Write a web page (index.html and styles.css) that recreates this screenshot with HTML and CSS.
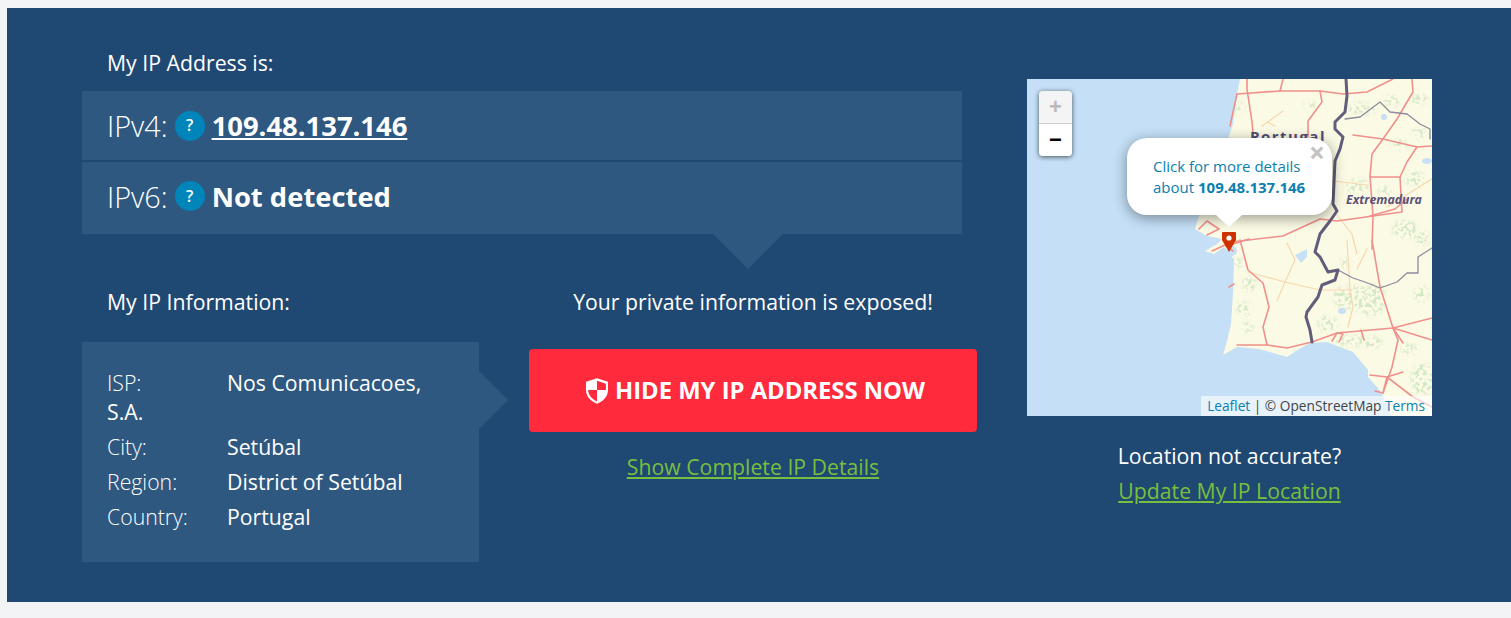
FILE: index.html
```html
<!DOCTYPE html>
<html lang="en">
<head>
<meta charset="utf-8">
<title>My IP Address</title>
<link rel="stylesheet" href="styles.css">
</head>
<body>
<main class="panel">
  <section class="left">
    <h2 class="heading">My IP Address is:</h2>
    <div class="ip-rows">
      <div class="ip-row ip-row-first">
        <span class="ip-label">IPv4:</span>
        <span class="help">?</span>
        <a class="ip-value" href="#">109.48.137.146</a>
      </div>
      <div class="ip-row ip-row-second">
        <span class="ip-label">IPv6:</span>
        <span class="help">?</span>
        <strong class="ip-none">Not detected</strong>
      </div>
    </div>
    <div class="lower">
      <div class="info-col">
        <h2 class="heading info-heading">My IP Information:</h2>
        <div class="info-box">
          <div class="info-item"><span class="info-key">ISP:</span>Nos Comunicacoes, S.A.</div>
          <div class="info-item"><span class="info-key">City:</span>Setúbal</div>
          <div class="info-item"><span class="info-key">Region:</span>District of Setúbal</div>
          <div class="info-item"><span class="info-key">Country:</span>Portugal</div>
        </div>
      </div>
      <div class="action-col">
        <p class="exposed">Your private information is exposed!</p>
        <a class="hide-btn" href="#">
          <svg class="shield" viewBox="0 0 24 28" aria-hidden="true">
            <path fill="#fff" d="M12 0 L24 4 V13 C24 20.500 18.500 25.500 12 28 C5.500 25.500 0 20.500 0 13 V4 Z"/>
            <path fill="#ff2a3c" d="M12 2.800 L21.700 6 V13 H12 Z M2.300 13 H12 V25.400 C6.800 23.200 2.700 19 2.300 13 Z"/>
          </svg>
          HIDE MY IP ADDRESS NOW
        </a>
        <a class="green-link" href="#">Show Complete IP Details</a>
      </div>
    </div>
  </section>
  <aside class="right">
    <div class="map">
      <svg class="map-art" viewBox="0 0 405 337" aria-hidden="true">
        <defs>
          <filter id="speckle" x="0" y="0" width="100%" height="100%">
            <feGaussianBlur in="SourceGraphic" stdDeviation="2" result="area"/>
            <feTurbulence type="fractalNoise" baseFrequency="0.28" numOctaves="2" seed="7"/>
            <feColorMatrix type="matrix" values="0 0 0 0 0.66  0 0 0 0 0.81  0 0 0 0 0.56  0 0 0 7 -3.300"/>
            <feGaussianBlur stdDeviation="0.500"/>
            <feComposite in2="area" operator="in"/>
          </filter>
          <filter id="softer" x="-10%" y="-10%" width="120%" height="120%"><feGaussianBlur stdDeviation="0.450"/></filter>
        </defs>
        <rect width="405" height="337" fill="#c4dff6"/>
        <path fill="#fbfae4" filter="url(#softer)" d="M213 0 L209 20 L206 45 L196 75 L185 110 L172 137 L168 150 L180 157 L195 160 L190 165 L178 172 L187 175 L197 168 L207 180 L206 214 L204 245 L200 262 L196 276 L210 268 L232 270 L253 276 L260 278 L272 270 L283 264 L300 263 L326 273 L341 291 L341 298 L350 308 L356 317 L365 337 L405 337 L405 0 Z"/>
        <g fill="#000" filter="url(#speckle)">
          <ellipse cx="283" cy="26" rx="6" ry="4"/><ellipse cx="213" cy="30" rx="4" ry="7"/><ellipse cx="335" cy="30" rx="14" ry="6"/>
          <ellipse cx="365" cy="22" rx="9" ry="5"/><ellipse cx="392" cy="20" rx="9" ry="5"/><ellipse cx="392" cy="54" rx="8" ry="5"/>
          <ellipse cx="372" cy="65" rx="9" ry="5"/><ellipse cx="388" cy="100" rx="10" ry="8"/><ellipse cx="358" cy="112" rx="7" ry="5"/>
          <ellipse cx="330" cy="107" rx="12" ry="7"/><ellipse cx="378" cy="150" rx="13" ry="9"/><ellipse cx="395" cy="160" rx="8" ry="7"/>
          <ellipse cx="318" cy="184" rx="6" ry="5"/><ellipse cx="325" cy="218" rx="20" ry="12"/><ellipse cx="345" cy="225" rx="12" ry="12"/>
          <ellipse cx="300" cy="245" rx="10" ry="8"/><ellipse cx="322" cy="262" rx="16" ry="6"/>
          <ellipse cx="345" cy="263" rx="10" ry="6"/><ellipse cx="396" cy="300" rx="12" ry="16"/><ellipse cx="382" cy="270" rx="9" ry="5"/>
          <ellipse cx="223" cy="205" rx="8" ry="7"/><ellipse cx="216" cy="230" rx="8" ry="7"/><ellipse cx="221" cy="248" rx="5" ry="6"/>
          <ellipse cx="212" cy="184" rx="5" ry="5"/><ellipse cx="350" cy="210" rx="9" ry="7"/><ellipse cx="395" cy="215" rx="8" ry="8"/>
        </g>
        <g fill="#c7e0f5" filter="url(#softer)">
          <path d="M268 176 L280 170 L280 178 L274 184 Z"/>
          <ellipse cx="357" cy="38" rx="3" ry="3"/><ellipse cx="400" cy="82" rx="5" ry="3"/><ellipse cx="315" cy="232" rx="4" ry="3"/>
          <ellipse cx="205" cy="172" rx="5" ry="5"/>
        </g>
        <g fill="none" stroke-linecap="round" stroke-linejoin="round" filter="url(#softer)">
          <g stroke="#f8d7ae" stroke-width="1.200">
            <path d="M221 193 L258 203 L293 211 L323 211"/>
            <path d="M320 161 L323 211 L326 228 L321 248"/>
            <path d="M260 164 L268 181 L258 203 L250 222"/>
            <path d="M235 47 L256 32 M240 43 L248 47"/>
            <path d="M360 128 L405 100 M290 100 L340 106"/>
            <path d="M340 170 L330 190 M310 136 L325 155 L330 175"/>
          </g>
          <g stroke="#f0908c" stroke-width="1.600">
            <path d="M220 0 L220 10 L225 43 L226 54"/>
            <path d="M210 15 L253 12 L293 12 L316 15 L340 13 L366 0"/>
            <path d="M293 12 L295 23 L281 42 L281 58"/>
            <path d="M256 0 L253 12"/>
            <path d="M210 15 L203 47"/>
            <path d="M385 0 L386 13 L370 40 L356 60 L345 75 L343 97 L346 137 L345 170"/>
            <path d="M326 56 L356 60 L390 68 L405 67"/>
            <path d="M390 68 L380 83 L373 98 L343 98"/>
            <path d="M373 98 L375 133 L346 137 L310 142 L293 140 L256 157 L213 162 L203 163"/>
            <path d="M343 137 L368 130 L380 120"/>
            <path d="M213 161 L221 191 L236 204 L242 228 L236 248 L240 266"/>
            <path d="M210 266 L240 266 L260 269 L285 263 L310 254 L366 249 L405 239"/>
            <path d="M345 161 L353 208 L366 249 L371 261 L365 288 L356 314"/>
            <path d="M366 249 L405 261 M366 249 L376 264"/>
            <path d="M343 296 L360 298 L376 293 M360 298 L356 314 L348 312 M360 298 L386 318 L405 328"/>
            <path d="M305 262 L310 254 L316 255 L312 263 M334 251 L337 261"/>
            <path d="M172 150 L180 142 L192 150 L180 156 M185 172 L198 166 L206 172 M206 165 L222 160"/>
            <path d="M202 208 L207 205"/>
          </g>
          <path stroke="#8f8a9e" stroke-width="1.300" d="M318 40 L333 38 L353 23 L363 33 L380 35 L393 45 L403 50 L403 60"/>
          <path stroke="#8f8a9e" stroke-width="1.300" d="M311 191 L326 199 L338 203 L353 209 L370 203 L380 194 L391 194 L391 178 L405 169"/>
          <path stroke="#625d7a" stroke-width="3" d="M319 0 L320 17 L318 33 L308 43 L308 50 L316 58 L313 70 L308 82 L306 125 L310 132 L303 142 L293 155 L288 173 L293 178 L301 193 L311 191 L308 201 L295 206 L291 218 L280 233 L279 238 L283 251 L285 263"/>
        </g>
        <text class="map-country" x="223" y="63">Portugal</text>
        <text class="map-region" x="319" y="125">Extremadura</text>
      </svg>
      <div class="zoom-ctl">
        <span class="zoom-btn zoom-in">+</span>
        <span class="zoom-btn zoom-out">−</span>
      </div>
      <svg class="pin" viewBox="0 0 14 20" aria-hidden="true">
        <path fill="#cc3300" d="M1 0 H13 Q14 0 14 1 V8 L7 20 L0 8 V1 Q0 0 1 0 Z"/>
        <circle cx="7" cy="6" r="2.600" fill="#fff"/>
      </svg>
      <div class="popup">
        <span class="popup-close">×</span>
        <p class="popup-text">Click for more details about <b>109.48.137.146</b></p>
      </div>
      <div class="attribution"><a href="#">Leaflet</a> | © OpenStreetMap <a href="#">Terms</a></div>
    </div>
    <p class="accuracy">Location not accurate?</p>
    <a class="green-link" href="#">Update My IP Location</a>
  </aside>
</main>
</body>
</html>
```
FILE: styles.css
```css
* { box-sizing: border-box; }
html, body { height: 100%; }
body {
  margin: 0;
  padding: 8px 0 0 7px;
  background: #f3f4f6;
  font-family: "Open Sans", "Liberation Sans", sans-serif;
  font-size: 21.25px;
  line-height: 29px;
  color: #fff;
  overflow: hidden;
}
a { color: inherit; }
.panel {
  display: flex;
  height: 594px;
  padding: 40px 0 0 75px;
  background: #1f4872;
}
.left { width: 895px; flex: none; }
.right {
  width: 405px;
  flex: none;
  margin: 31px 0 0 50px;
  text-align: center;
}
.heading {
  margin: 0 0 14px;
  padding-left: 25px;
  font-size: 21.25px;
  font-weight: 400;
  line-height: 29px;
}
.ip-rows { position: relative; width: 880px; }
.ip-rows::after {
  content: "";
  position: absolute;
  top: 100%;
  left: 631px;
  border-style: solid;
  border-width: 35px 35px 0;
  border-color: #2e5880 transparent transparent;
}
.ip-row {
  display: flex;
  align-items: center;
  padding-left: 25px;
  background: #2e5880;
  font-size: 28.8px;
}
.ip-row-first { height: 69px; margin-bottom: 2px; }
.ip-row-second { height: 72px; padding-bottom: 4px; }
.ip-label { font-weight: 300; }
.help {
  display: flex;
  align-items: center;
  justify-content: center;
  width: 30px;
  height: 30px;
  margin: 0 7px;
  border-radius: 50%;
  background: #0085ba;
  font-size: 16px;
  font-weight: 600;
}
.ip-value, .ip-none { font-size: 27.4px; font-weight: 700; }
.lower { display: flex; margin-top: 53px; }
.info-col { width: 397px; flex: none; }
.info-heading { margin-bottom: 26px; }
.info-box {
  position: relative;
  height: 220px;
  padding: 26px 30px 0 25px;
  background: #2e5880;
}
.info-box::after {
  content: "";
  position: absolute;
  top: 29px;
  left: 100%;
  border-style: solid;
  border-width: 29px 0 29px 29px;
  border-color: transparent transparent transparent #2e5880;
}
.info-item { margin-bottom: 6px; }
.info-key { display: inline-block; width: 120px; font-weight: 300; }
.action-col {
  width: 448px;
  flex: none;
  margin-left: 50px;
  text-align: center;
}
.exposed { margin: 0 0 33px; }
.hide-btn {
  display: flex;
  align-items: center;
  justify-content: center;
  height: 83px;
  margin-bottom: 20px;
  padding-left: 5.500px;
  border-radius: 4px;
  background: #ff2a3c;
  font-size: 23.8px;
  font-weight: 700;
  text-decoration: none;
}
.shield { width: 22px; height: 26px; margin-right: 6.500px; }
.green-link { color: #77bf3f; }
.map {
  position: relative;
  height: 337px;
  overflow: hidden;
  margin-bottom: 25px;
  line-height: 1;
}
.map-art { display: block; width: 405px; height: 337px; }
.map-country {
  font-size: 15px;
  font-weight: 700;
  letter-spacing: 1.500px;
  fill: #544c74;
}
.map-region {
  font-size: 12.3px;
  font-weight: 700;
  font-style: italic;
  fill: #5a5279;
}
.zoom-ctl {
  position: absolute;
  top: 12px;
  left: 12px;
  width: 33px;
  height: 65px;
  border-radius: 4px;
  overflow: hidden;
  box-shadow: 0 1px 5px rgba(0, 0, 0, .65);
}
.zoom-btn {
  display: block;
  height: 32px;
  text-align: center;
  font-size: 22px;
  font-weight: 700;
  line-height: 32px;
  font-family: "Liberation Sans", sans-serif;
}
.zoom-in {
  height: 33px;
  background: #f4f4f4;
  color: #bbb;
  border-bottom: 1px solid #ccc;
}
.zoom-out { background: #fff; color: #000; }
.pin {
  position: absolute;
  top: 153px;
  left: 195px;
  width: 14px;
  height: 20px;
}
.popup {
  position: absolute;
  top: 59px;
  left: 100px;
  width: 205px;
  height: 77px;
  padding: 18px 20px 0 26px;
  border-radius: 20px;
  background: #fff;
  box-shadow: 0 3px 14px rgba(0, 0, 0, .4);
}
.popup-text {
  position: relative;
  margin: 0;
  font-size: 15px;
  line-height: 21px;
  color: #0c7fae;
  text-align: left;
}
.popup-close {
  position: absolute;
  top: 3px;
  right: 7px;
  font-size: 28px;
  line-height: 22px;
  font-weight: 700;
  color: #c3c3c3;
}
.popup::after {
  content: "";
  position: absolute;
  top: 100%;
  left: 89px;
  border-style: solid;
  border-width: 12px 13px 0;
  border-color: #fff transparent transparent;
}
.attribution {
  position: absolute;
  right: 0;
  bottom: 0;
  height: 20px;
  padding: 0 7px 0 6px;
  background: rgba(255, 255, 255, .6);
  font-size: 13.7px;
  line-height: 20px;
  color: #444;
}
.attribution a { color: #0a7fb0; text-decoration: none; }
.accuracy { margin: 0 0 6px; }
```
